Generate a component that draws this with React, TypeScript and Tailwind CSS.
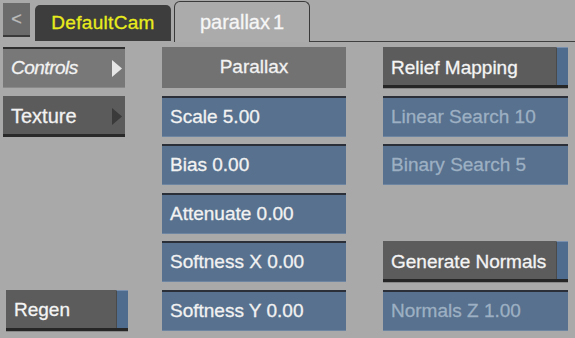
import React from "react";

const FONT = { fontFamily: '"Liberation Sans", Arial, sans-serif' };

type FieldProps = { label: string; disabled?: boolean };

const Field = ({ label, disabled }: FieldProps) => (
  <div
    className={`h-full flex items-center pl-[8px] pt-[1px] bg-[#57718e] border-t-2 border-t-[#2b3038] border-b border-b-[#6d85a0] text-[19px] ${
      disabled ? "text-[#9db0c3]" : "text-[#f2f2f2]"
    }`}
  >
    {label}
  </div>
);

const Toggle = ({ label }: { label: string }) => (
  <div className="h-full flex bg-[#5c5c5c] border-b-[3px] border-b-[#262626] shadow-[0_1px_0_#888]">
    <div className="flex-1 flex items-center pl-[8px] pt-[4px] text-[19px] text-[#f4f4f4]">
      {label}
    </div>
    <div className="w-[12px] bg-[#4f6b8e] border-t border-t-[#7890ad] border-l border-l-[#4a4a4a]" />
  </div>
);

const MenuButton = ({
  label,
  active,
}: {
  label: string;
  active?: boolean;
}) => (
  <div
    className={`h-full flex items-center justify-between pl-[8px] pr-[3px] text-[19px] text-[#f2f2f2] ${
      active
        ? "bg-[#787878] border-t-2 border-t-[#2e2e2e] border-b border-b-[#8a8a8a]"
        : "bg-[#5b5b5b] border-b-[3px] border-b-[#2a2a2a] pt-[3px]"
    }`}
  >
    <span className={active ? "italic tracking-[-0.5px]" : "text-[20px]"}>
      {label}
    </span>
    <svg width="10" height="17" viewBox="0 0 10 17">
      <polygon
        points="0,0 10,8.5 0,17"
        fill={active ? "#e6e6e6" : "#3a3a3a"}
      />
    </svg>
  </div>
);

export default function App() {
  return (
    <div
      className="w-[575px] h-[338px] bg-[#a9a9a9] overflow-hidden [-webkit-text-stroke:0.3px_currentColor]"
      style={FONT}
    >
      {/* tab strip */}
      <div className="flex items-end h-[42px] pl-[3px]">
        <div className="w-[27px] h-[34px] mb-[5px] flex items-center justify-center bg-[#6b6b6b] border-b-2 border-b-[#3a3a3a] text-[#bdbdbd] text-[18px]">
          &lt;
        </div>
        <div className="ml-[5px] w-[136px] h-[36px] mb-[1px] flex items-center justify-center rounded-t-[5px] bg-[#3d3d3d] text-[#e9ec1c] text-[19px] tracking-[0.3px]">
          DefaultCam
        </div>
        <div className="ml-[3px] w-[136px] h-[41px] flex items-center justify-center rounded-t-[6px] border border-b-0 border-[#3a3a3a] bg-[#ababab] text-[#f6f6f6] text-[20px]">
          parallax<span className="ml-[3px]">1</span>
        </div>
        <div className="flex-1 h-[1px] bg-[#3f3f3f]" />
      </div>

      {/* controls */}
      <div className="flex mt-[5px] pl-[3px]">
        <div className="w-[125px] grid grid-rows-[repeat(6,41px)] gap-y-[7.5px]">
          <div className="w-[122px]">
            <MenuButton label="Controls" active />
          </div>
          <div className="w-[122px]">
            <MenuButton label="Texture" />
          </div>
          <div />
          <div />
          <div />
          <div className="ml-[3px] w-[122px]">
            <Toggle label="Regen" />
          </div>
        </div>

        <div className="ml-[34px] w-[184px] grid grid-rows-[repeat(6,41px)] gap-y-[7.5px]">
          <div className="h-full flex items-center justify-center bg-[#727272] text-[19px] text-[#f2f2f2]">
            Parallax
          </div>
          <Field label="Scale 5.00" />
          <Field label="Bias 0.00" />
          <Field label="Attenuate 0.00" />
          <Field label="Softness X 0.00" />
          <Field label="Softness Y 0.00" />
        </div>

        <div className="ml-[37px] w-[185px] grid grid-rows-[repeat(6,41px)] gap-y-[7.5px]">
          <Toggle label="Relief Mapping" />
          <Field label="Linear Search 10" disabled />
          <Field label="Binary Search 5" disabled />
          <div />
          <Toggle label="Generate Normals" />
          <Field label="Normals Z 1.00" disabled />
        </div>
      </div>
    </div>
  );
}
